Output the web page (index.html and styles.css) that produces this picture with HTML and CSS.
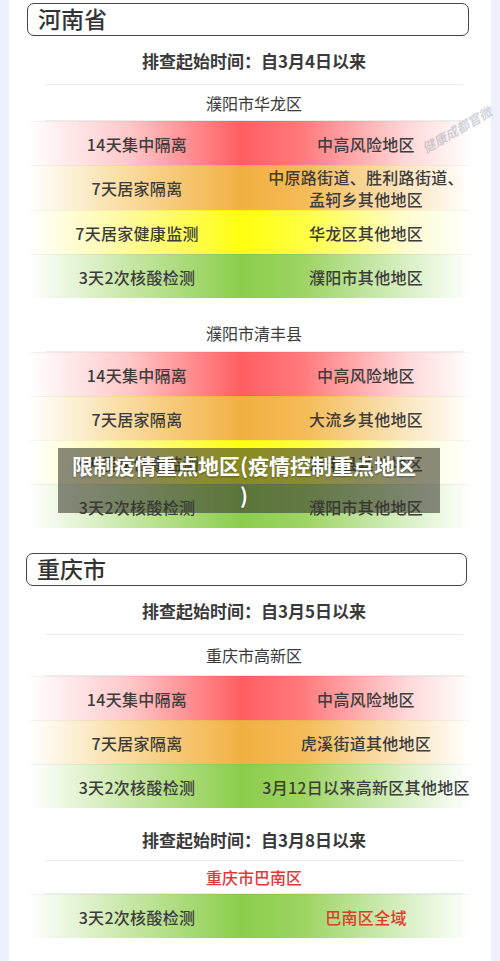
FILE: index.html
```html
<!DOCTYPE html>
<html lang="zh-CN">
<head>
<meta charset="utf-8">
<title>限制疫情重点地区</title>
<link rel="stylesheet" href="styles.css">
</head>
<body>
<main class="card">
  <section class="prov">
    <h2 class="prov-title">河南省</h2>
    <div class="time">排查起始时间：自3月4日以来</div>
    <div class="district">濮阳市华龙区</div>
    <div class="row red"><span class="l">14天集中隔离</span><span class="r">中高风险地区</span></div>
    <div class="row orange tall"><span class="l">7天居家隔离</span><span class="r">中原路街道、胜利路街道、<br>孟轲乡其他地区</span></div>
    <div class="row yellow"><span class="l">7天居家健康监测</span><span class="r">华龙区其他地区</span></div>
    <div class="row green"><span class="l">3天2次核酸检测</span><span class="r">濮阳市其他地区</span></div>
    <div class="district spaced">濮阳市清丰县</div>
    <div class="row red"><span class="l">14天集中隔离</span><span class="r">中高风险地区</span></div>
    <div class="row orange"><span class="l">7天居家隔离</span><span class="r">大流乡其他地区</span></div>
    <div class="row yellow"><span class="l">7天居家健康监测</span><span class="r">清丰县其他地区</span></div>
    <div class="row green"><span class="l">3天2次核酸检测</span><span class="r">濮阳市其他地区</span></div>
  </section>
  <section class="prov second">
    <h2 class="prov-title">重庆市</h2>
    <div class="time">排查起始时间：自3月5日以来</div>
    <div class="district short">重庆市高新区</div>
    <div class="row red"><span class="l">14天集中隔离</span><span class="r">中高风险地区</span></div>
    <div class="row orange"><span class="l">7天居家隔离</span><span class="r">虎溪街道其他地区</span></div>
    <div class="row green"><span class="l">3天2次核酸检测</span><span class="r">3月12日以来高新区其他地区</span></div>
    <div class="time late">排查起始时间：自3月8日以来</div>
    <div class="district hot">重庆市巴南区</div>
    <div class="row green"><span class="l">3天2次核酸检测</span><span class="r hot-text">巴南区全域</span></div>
  </section>
  <div class="watermark">健康成都官微</div>
  <div class="caption">限制疫情重点地区(疫情控制重点地区<br>)</div>
</main>
</body>
</html>
```
FILE: styles.css
```css
*, *::before, *::after {
  box-sizing: border-box;
}
html, body {
  margin: 0;
  padding: 0;
}
body {
  background: #eef1fb;
  font-family: "Noto Sans CJK SC", "Noto Sans", sans-serif;
  color: #333;
  overflow: hidden;
}
.card {
  position: relative;
  margin: 0 9px;
  background: #fff;
  min-height: 961px;
  padding-top: 3px;
}
.prov {
  display: flex;
  flex-direction: column;
}
.prov-title {
  margin: 0 22px 0 18px;
  height: 33px;
  border: 1.5px solid #444;
  border-radius: 7px;
  padding-left: 10px;
  font-size: 23px;
  font-weight: 500;
  line-height: 29px;
  color: #333;
}
.second {
  margin-top: 25px;
}
.second .prov-title {
  margin: 0 24px 0 17px;
}
.time {
  height: 49px;
  margin: 0 28px 0 36px;
  border-bottom: 1px solid #ececec;
  display: flex;
  align-items: center;
  justify-content: center;
  font-size: 17px;
  font-weight: 700;
  color: #3a3a3a;
  padding-top: 1px;
}
.time.late {
  height: 53px;
  padding-top: 10px;
}
.district {
  height: 36px;
  margin: 0 28px 0 36px;
  border-bottom: 1px solid #ececec;
  display: flex;
  align-items: center;
  justify-content: center;
  font-size: 16px;
  color: #3a3a3a;
}
.district.spaced {
  margin-top: 17px;
  height: 37px;
}
.district.short {
  height: 41px;
}
.district.hot {
  height: 33px;
  color: #e2383a;
  font-weight: 500;
}
.row {
  margin: 0 21px;
  height: 44px;
  display: grid;
  grid-template-columns: 214px 244px;
  align-items: center;
  border-top: 1px solid rgba(0, 0, 0, 0.04);
  font-size: 16px;
  font-weight: 500;
  color: #3c3c3c;
  letter-spacing: 0.3px;
  line-height: 22px;
}
.row .l {
  text-align: center;
}
.row .r {
  text-align: center;
  white-space: nowrap;
}
.red {
  background: linear-gradient(90deg, rgba(255,255,255,0) 0%, #ffc9cb 22%, #ff5e62 48%, #ff7a7d 62%, #ffd5d6 85%, rgba(255,255,255,0) 100%);
}
.orange {
  background: linear-gradient(90deg, rgba(255,255,255,0) 0%, #f9dc9f 22%, #f2b043 48%, #f4bb55 62%, #fbe5bd 85%, rgba(255,255,255,0) 100%);
}
.yellow {
  background: linear-gradient(90deg, rgba(255,255,255,0) 0%, #fffa9c 22%, #ffff10 48%, #ffff40 62%, #fffccc 85%, rgba(255,255,255,0) 100%);
}
.green {
  background: linear-gradient(90deg, rgba(255,255,255,0) 0%, #c9e8a8 22%, #8ccd4c 48%, #9dd463 62%, #d7efc2 85%, rgba(255,255,255,0) 100%);
}
.tall {
  height: 45px;
}
.hot-text {
  color: #e23b2c;
}
.watermark {
  position: absolute;
  top: 121px;
  left: 409px;
  transform: rotate(-30deg);
  font-size: 13px;
  line-height: 18px;
  font-weight: 700;
  font-style: italic;
  color: rgba(150, 160, 175, 0.45);
  white-space: nowrap;
}
.caption {
  position: absolute;
  top: 448px;
  left: 49px;
  width: 382px;
  height: 65px;
  padding: 2px 22px 0 12px;
  background: rgba(55, 55, 45, 0.58);
  color: #fff;
  font-size: 21px;
  font-weight: 700;
  line-height: 30px;
  text-align: center;
  text-shadow: 0 1px 2px rgba(0, 0, 0, 0.35);
}
```
